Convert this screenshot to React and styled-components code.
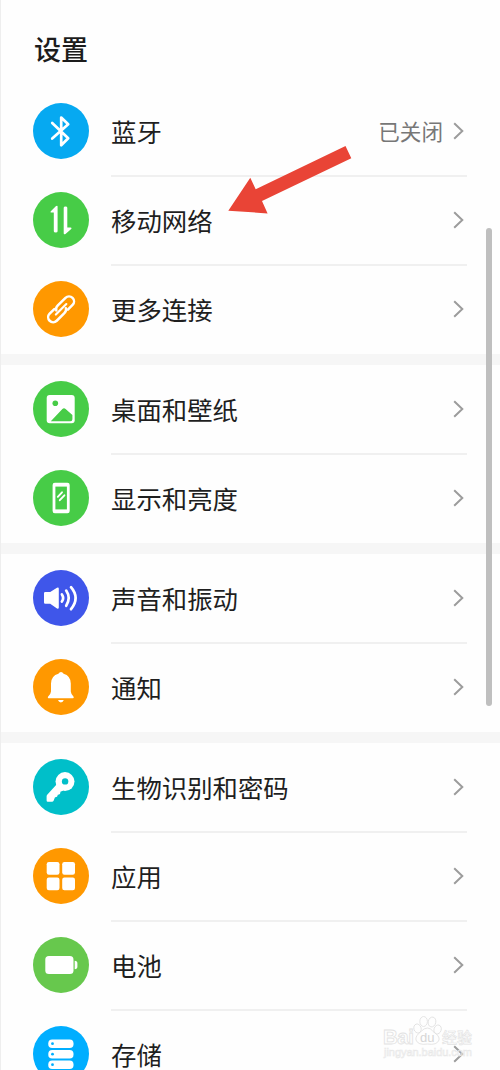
import React from 'react';
import styled, { createGlobalStyle } from 'styled-components';

const GlobalStyle = createGlobalStyle`
  * {
    box-sizing: border-box;
  }
  body {
    margin: 0;
    background: #fefefe;
    font-family: 'Noto Sans CJK SC', sans-serif;
  }
`;

const Screen = styled.div`
  position: relative;
  width: 500px;
  height: 1070px;
  overflow: hidden;
  border-left: 1px solid #eeeeee;
  background: #fefefe;
`;

const Title = styled.h1`
  margin: 0;
  height: 87px;
  padding: 28px 0 0 33px;
  font-size: 27px;
  line-height: 41px;
  font-weight: 500;
  color: #1c1c1c;
`;

const Group = styled.section`
  & + & {
    border-top: 11px solid #f6f6f6;
  }
`;

const Row = styled.div`
  display: flex;
  height: 89px;
  padding: 16px 36px 17px 32px;
  align-items: center;
`;

const Divider = styled.div`
  height: 2px;
  margin: -1px 33px -1px 110px;
  background: #f0f0f0;
`;

const Badge = styled.svg`
  width: 56px;
  height: 56px;
  flex: none;
  border-radius: 50%;
  background: ${props => props.$color};
  color: ${props => props.$color};
`;

const Label = styled.div`
  flex: 1;
  margin-left: 22px;
  font-size: 25.4px;
  line-height: 28px;
  color: #1f1f1f;
  white-space: nowrap;
`;

const Value = styled.div`
  margin-right: 10px;
  font-size: 21.6px;
  line-height: 32px;
  color: #777777;
`;

const Chevron = styled.svg`
  width: 11px;
  height: 20px;
  flex: none;
`;

const Scrollbar = styled.div`
  position: absolute;
  top: 228px;
  right: 8px;
  width: 6px;
  height: 478px;
  border-radius: 3px;
  background: #bfbfbf;
`;

const Pointer = styled.svg`
  position: absolute;
  top: 140px;
  left: 219px;
  width: 140px;
  height: 80px;
`;

const Watermark = styled.svg`
  position: absolute;
  top: 1012px;
  left: 379px;
  width: 100px;
  height: 50px;
`;

const icons = {
  bluetooth: (
    <path
      d="M19.2 20 L35.2 35.2 L28.2 42.3 V14.6 L35.2 21.2 L19.2 35.6"
      fill="none"
      stroke="#fff"
      strokeWidth="2.7"
      strokeLinecap="round"
      strokeLinejoin="round"
    />
  ),
  mobile: (
    <g fill="#fff">
      <path d="M24.6 14.6 V39.2 Q24.6 40.4 22.7 40.4 Q20.8 40.4 20.8 39.2 V20.6 H18.2 Q16.8 20.4 17.8 19.2 L22.8 14.2 Q24.6 13.2 24.6 14.6 Z" />
      <path d="M30.7 41.2 V15.8 Q30.7 14.6 32.5 14.6 Q34.3 14.6 34.3 15.8 V35.4 H37.6 Q39.3 35.6 38.2 36.9 L32.5 42 Q30.7 43 30.7 41.2 Z" />
    </g>
  ),
  link: (
    <g
      transform="translate(28.1 28.3) rotate(-45)"
      fill="none"
      stroke="#fff"
      strokeWidth="2.5"
      strokeLinecap="round"
    >
      <path d="M-4.6 -5 H-11.2 A5 5 0 0 0 -11.2 5 H-0.4 Q3 5 4.2 2.6" />
      <path d="M4.6 5 H11.2 A5 5 0 0 0 11.2 -5 H0.4 Q-3 -5 -4.2 -2.6" />
      <path d="M-7.4 0 H7.4" strokeWidth="2.2" />
    </g>
  ),
  picture: (
    <g>
      <rect x="13.7" y="14" width="28" height="28.2" rx="3" fill="#fff" />
      <circle cx="22.3" cy="22.3" r="2.8" fill="currentColor" />
      <path
        d="M17.8 40.2 L29.4 28 Q31 26.5 32.6 28 L39.4 34 V38.2 Q39.4 40.2 37.4 40.2 Z"
        fill="currentColor"
      />
    </g>
  ),
  display: (
    <g>
      <rect x="19.6" y="12.8" width="17.1" height="30.4" rx="2.2" fill="#fff" />
      <rect x="22.4" y="16.6" width="11.5" height="22.8" fill="currentColor" />
      <path
        d="M24.8 26.8 L29 22.3 M26.8 30.2 L31.4 25.3"
        stroke="#fff"
        strokeWidth="1.9"
        strokeLinecap="round"
      />
    </g>
  ),
  sound: (
    <g>
      <path
        d="M12.2 22 H17.2 L24 17.8 Q25.8 17 25.8 18.8 V37.6 Q25.8 39.4 24 38.4 L17.2 33.8 H12.2 Q11 33.8 11 32.6 V23.2 Q11 22 12.2 22 Z"
        fill="#fff"
      />
      <path
        d="M28.9 24.4 Q31.4 28 28.9 31.6 M33.2 20.6 Q38.2 28 33.2 35.8 M38 17.2 Q47.2 28 38 39.2"
        fill="none"
        stroke="#fff"
        strokeWidth="2.7"
        strokeLinecap="round"
      />
    </g>
  ),
  bell: (
    <g fill="#fff">
      <path d="M28 13 Q29.6 13 30.6 14.8 Q37.6 16.8 37.8 24.5 V32.6 Q38 35.4 40.6 37.7 Q41.2 39.2 39.8 39.3 H15.7 Q14.3 39.2 15 37.7 Q17.8 35.4 18 32.6 V24.5 Q18.2 16.8 25.4 14.8 Q26.4 13 28 13 Z" />
      <path d="M25 41 H30.8 Q30 43.4 27.9 43.4 Q25.8 43.4 25 41 Z" />
    </g>
  ),
  key: (
    <g>
      <path
        d="M24 25 L30.4 31.4 L27.4 32.8 Q27.6 35.8 24.8 35.8 Q24.6 36.4 24.2 37.6 Q23.2 38.4 22 38.2 L20.6 41.8 Q20.2 42.8 19 42.8 H14.8 Q13.6 42.8 13.6 41.6 V37.4 Q13.6 36.4 14.2 35.8 Z"
        fill="#fff"
      />
      <circle cx="32" cy="22.6" r="9.5" fill="#fff" />
      <circle cx="32.1" cy="22.4" r="3.2" fill="currentColor" />
    </g>
  ),
  apps: (
    <g fill="#fff">
      <rect x="13.7" y="14" width="12.8" height="12.7" rx="2.2" />
      <rect x="29.2" y="14" width="12.8" height="12.7" rx="2.2" />
      <rect x="13.7" y="29.5" width="12.8" height="12.7" rx="2.2" />
      <rect x="29.2" y="29.5" width="12.8" height="12.7" rx="2.2" />
    </g>
  ),
  battery: (
    <g fill="#fff">
      <rect x="12.3" y="19.1" width="28.2" height="18" rx="3.6" />
      <path d="M41.7 23.8 Q44.4 23.8 44.4 26.4 V29.6 Q44.4 32.2 41.7 32.2 Z" />
    </g>
  ),
  storage: (
    <g>
      {[13.4, 23.9, 34.4].map(y => (
        <g key={y}>
          <rect x="15.3" y={y} width="25.2" height="8.6" rx="3.8" fill="#fff" />
          <circle cx="19.5" cy={y + 4.3} r="1.4" fill="currentColor" />
        </g>
      ))}
    </g>
  ),
};

const groups = [
  [
    { icon: 'bluetooth', color: '#06a9f1', label: '蓝牙', value: '已关闭' },
    { icon: 'mobile', color: '#47cc47', label: '移动网络' },
    { icon: 'link', color: '#ff9800', label: '更多连接' },
  ],
  [
    { icon: 'picture', color: '#47cc47', label: '桌面和壁纸' },
    { icon: 'display', color: '#47cc47', label: '显示和亮度' },
  ],
  [
    { icon: 'sound', color: '#3f56ea', label: '声音和振动' },
    { icon: 'bell', color: '#ff9800', label: '通知' },
  ],
  [
    { icon: 'key', color: '#00bfc9', label: '生物识别和密码' },
    { icon: 'apps', color: '#ff9800', label: '应用' },
    { icon: 'battery', color: '#67c84d', label: '电池' },
    { icon: 'storage', color: '#00aeff', label: '存储' },
  ],
];

const SettingRow = ({ icon, color, label, value }) => (
  <Row>
    <Badge viewBox="0 0 56 56" $color={color}>
      {icons[icon]}
    </Badge>
    <Label>{label}</Label>
    {value && <Value>{value}</Value>}
    <Chevron viewBox="0 0 11 20">
      <path d="M1.2 2.2 L9.3 10 L1.2 17.8" fill="none" stroke="#9c9c9c" strokeWidth="2" />
    </Chevron>
  </Row>
);

const App = () => {
  return (
    <>
      <GlobalStyle />
      <Screen>
        <Title>设置</Title>
        {groups.map((rows, i) => (
          <Group key={i}>
            {rows.map((row, j) => (
              <React.Fragment key={row.label}>
                {j > 0 && <Divider />}
                <SettingRow {...row} />
              </React.Fragment>
            ))}
          </Group>
        ))}
        <Scrollbar />
        <Pointer viewBox="220 140 140 80">
          <path
            d="M345.5 146 L351.3 158.3 L262 201 L267.6 213.4 L228.3 210.7 L250.3 177.7 L255.7 189.3 Z"
            fill="#e94436"
          />
        </Pointer>
        <Watermark viewBox="380 1012 100 50">
          <g fill="none" stroke="#e2e2e2" strokeWidth="0.9">
            <ellipse cx="417.5" cy="1028.5" rx="3.6" ry="4.6" transform="rotate(-18 417.5 1028.5)" />
            <ellipse cx="423.6" cy="1021.5" rx="3.8" ry="5" />
            <ellipse cx="432" cy="1022" rx="3.8" ry="5" transform="rotate(12 432 1022)" />
            <ellipse cx="437.6" cy="1029.5" rx="3.6" ry="4.6" transform="rotate(18 437.6 1029.5)" />
            <path d="M427.5 1028 Q431 1028 433 1031.5 Q440 1036 439 1040 Q437 1045.5 427.5 1044 Q418 1045.5 416 1040 Q415 1036 421 1031.5 Q424 1028 427.5 1028 Z" />
            <text x="383" y="1044" fontFamily="Liberation Sans, sans-serif" fontWeight="700" fontSize="20.5" strokeWidth="0.8" textLength="31">
              Bai
            </text>
            <text x="442" y="1043" fontSize="15" fontWeight="500" strokeWidth="0.6" textLength="30">
              经验
            </text>
          </g>
          <text x="420" y="1041.5" fontFamily="Liberation Sans, sans-serif" fontSize="13" fill="#d6d6d6">
            du
          </text>
          <text x="384" y="1056" fontFamily="Liberation Sans, sans-serif" fontSize="11" fill="none" stroke="#e8e8e8" strokeWidth="0.6" textLength="88">
            jingyan.baidu.com
          </text>
        </Watermark>
      </Screen>
    </>
  );
};

export default App;
